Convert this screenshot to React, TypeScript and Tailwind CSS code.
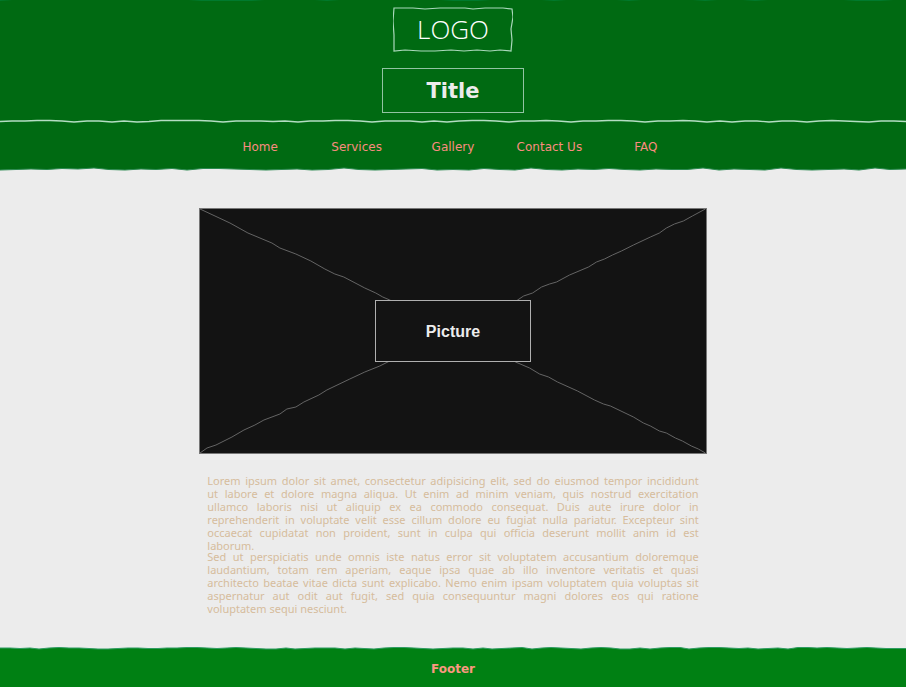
import React from "react";

const navItems = ["Home", "Services", "Gallery", "Contact Us", "FAQ"];

const paragraphs = [
  [
    "Lorem ipsum dolor sit amet, consectetur adipisicing elit, sed do eiusmod tempor incididunt",
    "ut labore et dolore magna aliqua. Ut enim ad minim veniam, quis nostrud exercitation",
    "ullamco laboris nisi ut aliquip ex ea commodo consequat. Duis aute irure dolor in",
    "reprehenderit in voluptate velit esse cillum dolore eu fugiat nulla pariatur. Excepteur sint",
    "occaecat cupidatat non proident, sunt in culpa qui officia deserunt mollit anim id est",
    "laborum.",
  ],
  [
    "Sed ut perspiciatis unde omnis iste natus error sit voluptatem accusantium doloremque",
    "laudantium, totam rem aperiam, eaque ipsa quae ab illo inventore veritatis et quasi",
    "architecto beatae vitae dicta sunt explicabo. Nemo enim ipsam voluptatem quia voluptas sit",
    "aspernatur aut odit aut fugit, sed quia consequuntur magni dolores eos qui ratione",
    "voluptatem sequi nesciunt.",
  ],
];

const topEdge = [2, 1, 1, 0, 1, 1, 1, 1, 2, 2, 2, 1, 1, 2, 1, 1, 1, 1, 2, 2, 1, 1, 2, 1, 1, 2, 1, 1, 2, 1, 2, 1, 1, 1, 2, 2, 1];
const divider = [2.5, 2, 2, 1.5, 1.5, 2, 3, 2, 2, 3, 2, 3, 2.5, 1.5, 1.5, 1.5, 1.5, 2, 3, 2, 2, 2, 2.5, 2, 3, 2, 2, 1.5, 1.5, 2, 3, 2, 2, 2, 3, 2, 3, 2, 1.5, 1.5, 2, 3, 2, 2, 1.5, 2, 3, 2, 2, 1.5, 1.5, 2, 3, 2, 2, 1.5, 2, 3, 2, 3, 2, 2, 3, 2, 2, 3, 2, 1.5, 2, 2.5, 3, 2, 2, 2.5];
const navEdge = [3, 2.5, 2, 2.5, 1.5, 2, 1, 2.5, 3, 2, 2.5, 1.5, 3, 1.5, 1.5, 2, 2.5, 3, 2.5, 2, 3, 2.5, 1, 2.5, 3, 2.5, 2, 1.5, 3, 2.5, 3, 1.5, 2.5, 3, 1, 2.5, 3, 2, 2.5, 1.5, 2.5, 3, 2, 2.5, 2.5, 1, 3, 2, 2.5, 3, 1, 2.5, 3, 2.5, 2, 3, 1, 2.5, 2];
const footerEdge = [2, 2, 2.5, 2, 3, 2, 1.5, 2, 2, 2.5, 3, 3, 2.5, 2, 2, 2.5, 2.5, 2, 2, 1.5, 1.5, 2, 2.5, 2, 1.5, 2, 2.5, 3, 3, 2, 3, 2.5, 2, 2, 2, 3, 2, 2.5, 3, 2, 1.5, 1.5, 2, 2.5, 3, 2.5, 2, 2, 3, 2, 3, 2.5, 2, 1.5, 3, 2, 1.5, 2, 2.5, 3, 2, 1.5, 2, 3, 3, 2, 3, 2, 1.5, 1.5, 3, 2, 1.5, 1.5, 2, 2.5, 2, 3, 2.5, 2, 3, 1.5, 1.5, 2, 1.5, 2, 2.5, 2, 1.5, 2, 2.5, 2.5, 2.5];

function trace(offsets: number[]) {
  const step = 906 / (offsets.length - 1);
  return offsets.map((y, i) => `${i === 0 ? "M" : "L"}${Math.round(i * step)} ${y}`).join(" ");
}

function RoughEdge({ offsets, below, stroke, width = 1 }: { offsets: number[]; below: string; stroke: string; width?: number }) {
  const d = trace(offsets);
  return (
    <svg aria-hidden="true" className="block h-1 w-full" viewBox="0 0 906 4" preserveAspectRatio="none">
      <path d={`${d} V4 H0 Z`} fill={below} />
      <path d={d} fill="none" stroke={stroke} strokeWidth={width} />
    </svg>
  );
}

export default function App() {
  return (
    <div className="flex min-h-screen flex-col bg-[#ececec] font-['DejaVu_Sans',Verdana,sans-serif]">
      <header className="bg-[#006a12]">
        <svg aria-hidden="true" className="block h-1 w-full" viewBox="0 0 906 4" preserveAspectRatio="none">
          <path d={trace(topEdge)} transform="translate(0 -2)" fill="none" stroke="#008a4a" />
        </svg>
        <div className="flex flex-col items-center gap-4 pt-[3px]">
          <div className="relative flex h-[45px] w-[120px] items-center justify-center">
            <svg aria-hidden="true" className="absolute inset-0 size-full" viewBox="0 0 120 45" fill="none" stroke="#a9d8bb" strokeWidth="1.2">
              <path d="M1 1 L20 1 L32 2 L47 1 L60 1 L72 1 L80 2 L92 1 L101 1 L110 1 L119 2 L120 10 L118 22 L119 33 L118 44 L107 43 L97 44 L84 43 L71 44 L58 43 L42 44 L28 44 L12 43 L1 44 L1 28 L0 14 Z" />
            </svg>
            <span className="pb-[2px] font-['Open_Sans','Noto_Sans',sans-serif] text-[26px] leading-8 font-light text-white">LOGO</span>
          </div>
          <h1 className="flex h-[45px] w-[142px] items-center justify-center border border-[#92c3a3] text-[21px] leading-6 font-bold text-[#ececec]">
            Title
          </h1>
        </div>
        <div className="pt-[6px]">
          <RoughEdge offsets={divider} below="#006a12" stroke="#b4ddc3" width={1.3} />
        </div>
        <nav aria-label="Main" className="flex h-11 items-center justify-center pt-1">
          <ul className="grid w-[482px] grid-cols-5 text-center text-xs text-[#fa8c80]">
            {navItems.map((item) => (
              <li key={item}>
                <a href="#">{item}</a>
              </li>
            ))}
          </ul>
        </nav>
        <RoughEdge offsets={navEdge} below="#ececec" stroke="#2b8a50" />
      </header>

      <main className="mx-auto w-[56%] grow pt-[37px] pb-[30px]">
        <div className="relative flex h-[246px] items-center justify-center border border-[#777777] bg-[#131313]">
          <svg aria-hidden="true" className="absolute inset-0 size-full" viewBox="0 0 506 244" preserveAspectRatio="none" fill="none" stroke="#646464">
            <path d="M0 0 L30 14 L48 24 L72 34 L80 39 L96 45 L111 52 L125 60 L135 65 L144 68 L165 79 L176 84 L183 88 L190 91 L253 122 L316 153 L330 159 L340 165 L349 168 L358 173 L378 182 L395 191 L404 195 L411 197 L434 208 L444 214 L451 217 L460 222 L467 224 L476 229 L483 232 L492 237 L499 240 L506 244" />
            <path d="M0 244 L7 239 L16 236 L32 228 L44 221 L55 216 L64 211 L80 205 L87 200 L96 198 L104 193 L119 186 L127 181 L150 170 L165 163 L180 157 L190 152 L253 122 L318 91 L324 87 L333 84 L342 78 L350 75 L357 73 L370 66 L389 58 L397 53 L405 50 L413 46 L422 42 L434 36 L451 28 L460 24 L467 19 L475 15 L484 12 L493 7 L506 0" />
          </svg>
          <span className="relative flex h-[62px] w-[156px] items-center justify-center border border-[#b0b0b0] bg-[#131313] pt-px font-['Liberation_Sans',Arial,sans-serif] text-base font-bold text-[#ececec]">
            Picture
          </span>
        </div>
        <div className="flex flex-col px-2 pt-5 font-['Noto_Sans',sans-serif] text-[11px] leading-[13px] text-[#d6bc9c]">
          {paragraphs.map((lines) => (
            <p key={lines[0]} className="-mb-[2px]">
              {lines.map((line) => (
                <span key={line} className="block [text-align-last:justify] last:[text-align-last:left]">
                  {line}{" "}
                </span>
              ))}
            </p>
          ))}
        </div>
      </main>

      <footer className="text-center text-xs font-bold text-[#fa9880]">
        <RoughEdge offsets={footerEdge} below="#008013" stroke="#2f9c62" />
        <p className="bg-[#008013] pt-[10px] pb-[9px] leading-[18px]">Footer</p>
      </footer>
    </div>
  );
}
